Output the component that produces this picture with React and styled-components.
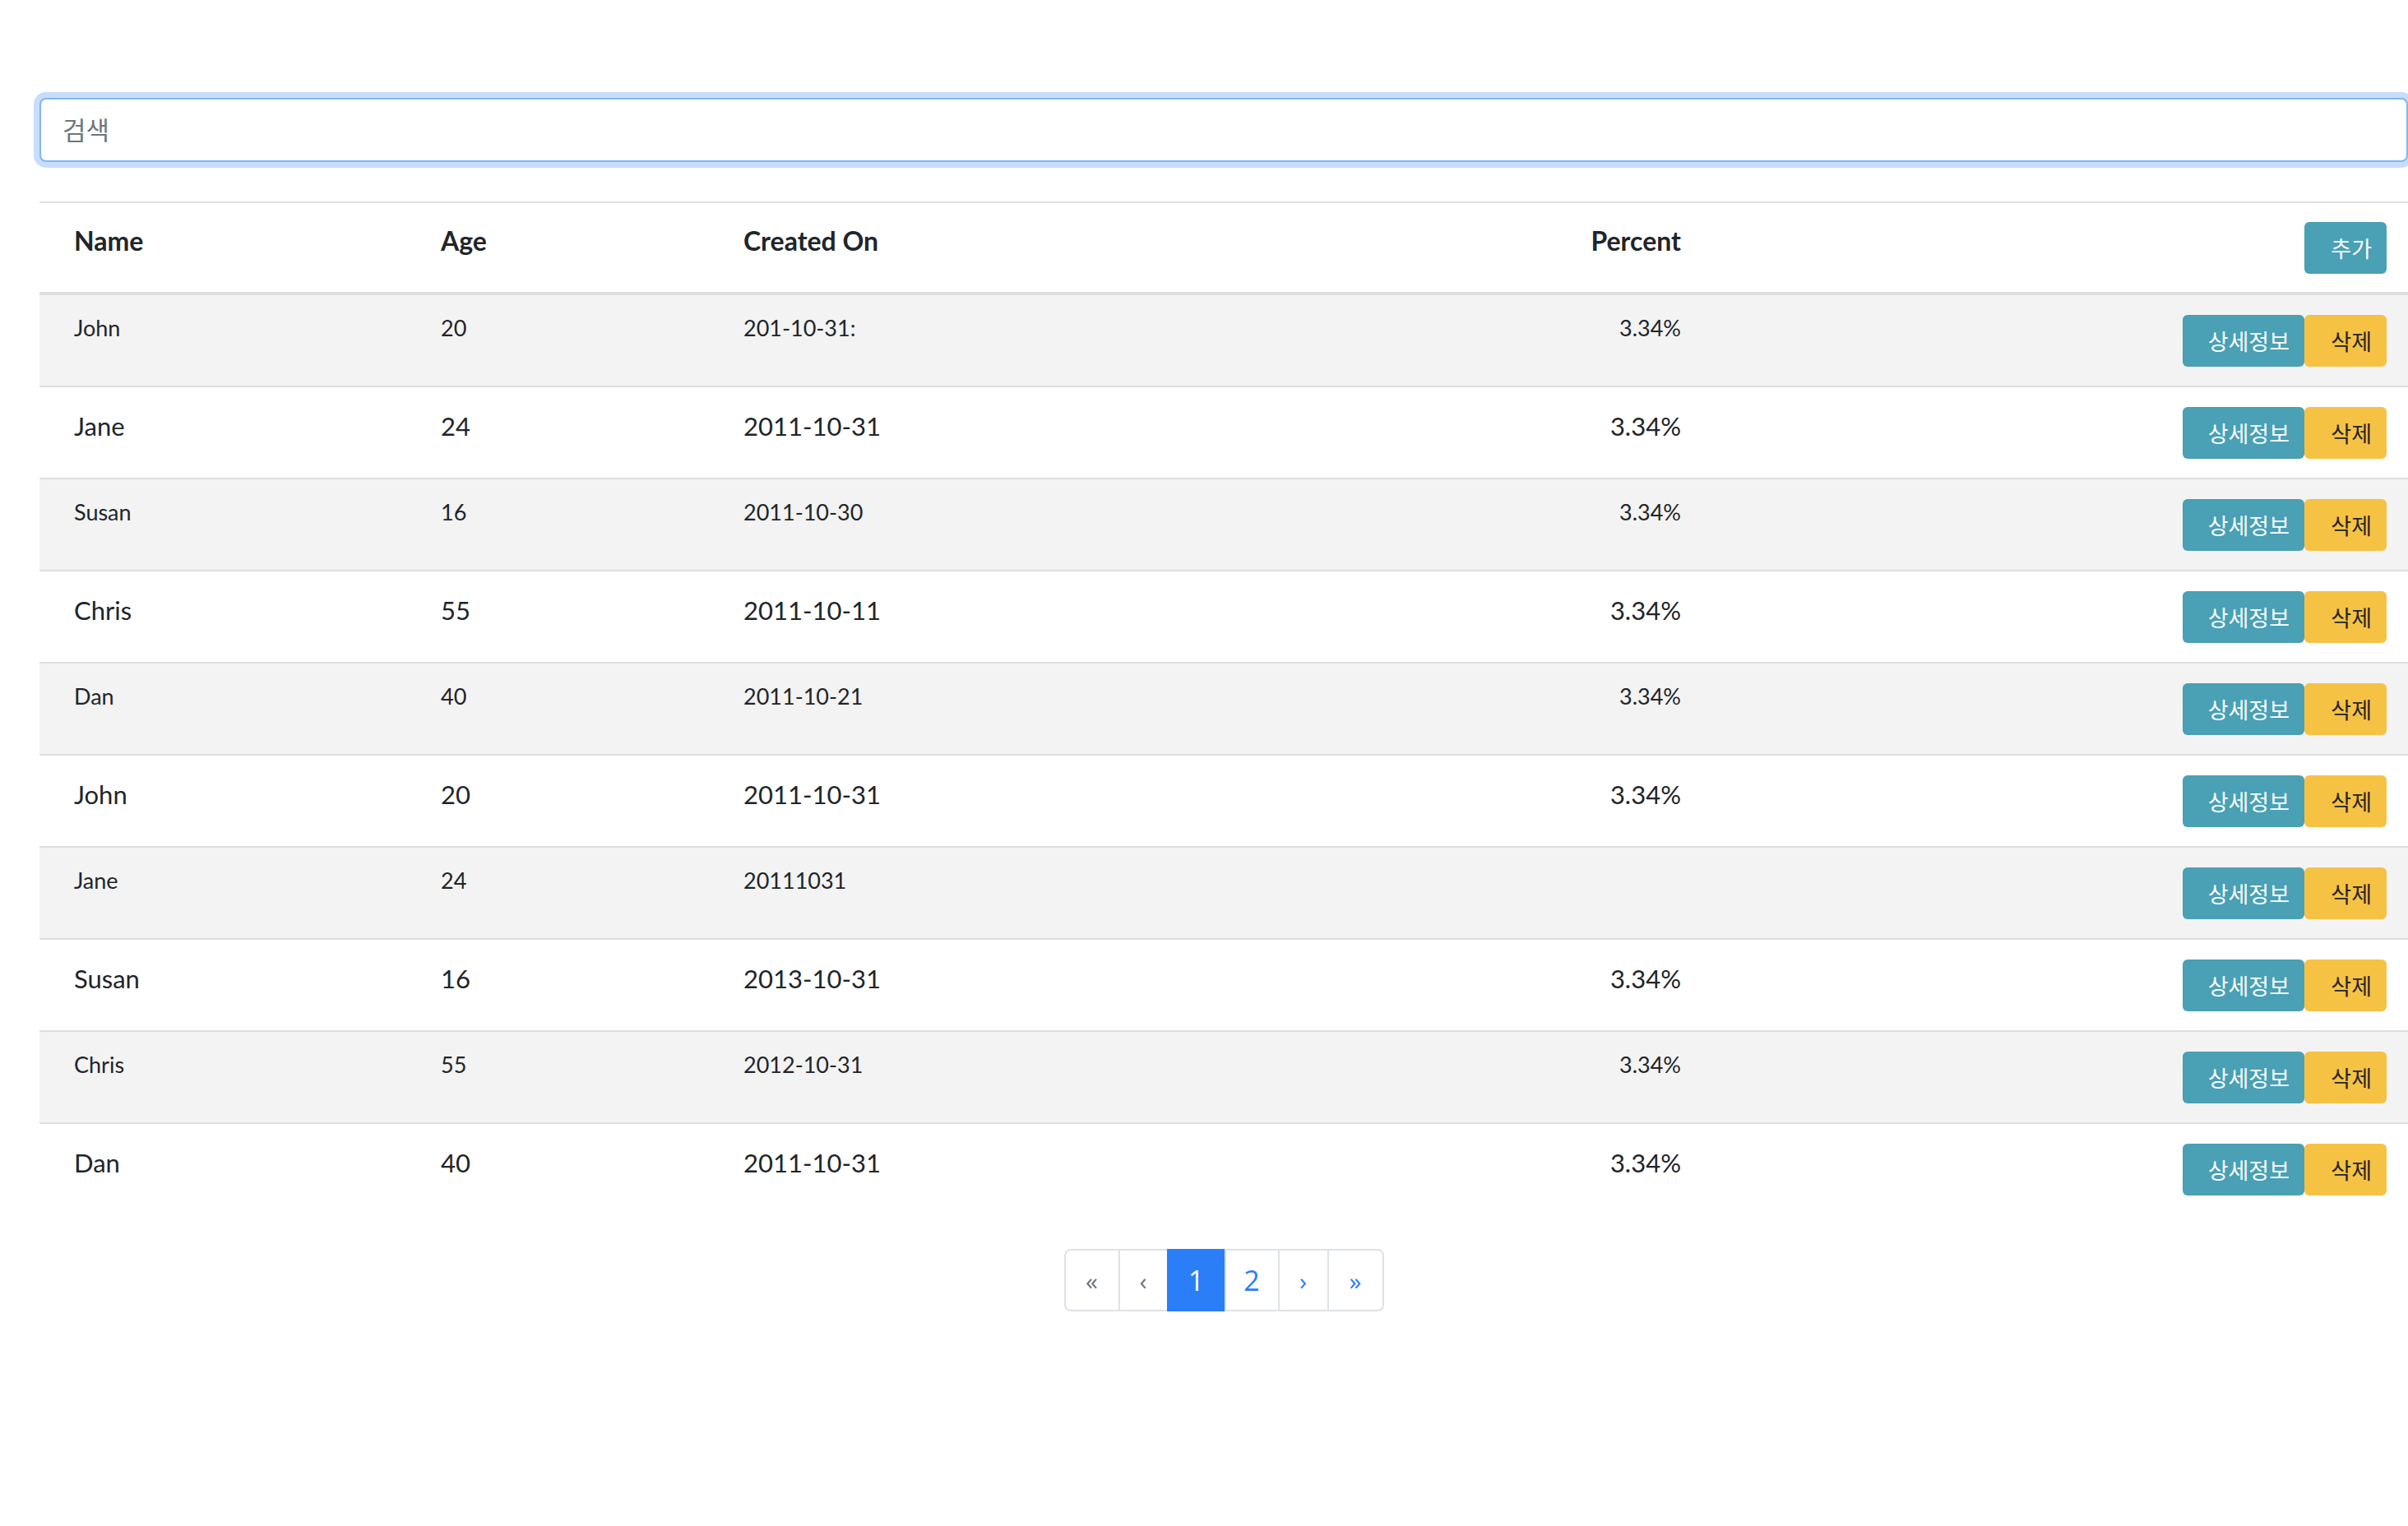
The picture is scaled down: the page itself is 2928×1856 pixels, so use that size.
import React from 'react';
import styled, { createGlobalStyle } from 'styled-components';

const GlobalStyle = createGlobalStyle`
  html, body {
    margin: 0;
    padding: 0;
    background: #ffffff;
  }
  body {
    font-family: Lato, "Noto Sans CJK KR", sans-serif;
    color: #212529;
  }
`;

const rows = [
  { name: 'John', age: 20, created: '201-10-31:', percent: '3.34%' },
  { name: 'Jane', age: 24, created: '2011-10-31', percent: '3.34%' },
  { name: 'Susan', age: 16, created: '2011-10-30', percent: '3.34%' },
  { name: 'Chris', age: 55, created: '2011-10-11', percent: '3.34%' },
  { name: 'Dan', age: 40, created: '2011-10-21', percent: '3.34%' },
  { name: 'John', age: 20, created: '2011-10-31', percent: '3.34%' },
  { name: 'Jane', age: 24, created: '20111031', percent: '' },
  { name: 'Susan', age: 16, created: '2013-10-31', percent: '3.34%' },
  { name: 'Chris', age: 55, created: '2012-10-31', percent: '3.34%' },
  { name: 'Dan', age: 40, created: '2011-10-31', percent: '3.34%' },
];

const Page = styled.div`
  padding: 119px 0 200px 48px;
  box-sizing: border-box;
  width: 2928px;
`;

const SearchInput = styled.input`
  display: block;
  box-sizing: border-box;
  width: 100%;
  height: 78px;
  padding: 0 26px 4px;
  border: 2px solid #80b6f8;
  border-radius: 8px;
  box-shadow: 0 0 0 7px #c7ddfb;
  outline: none;
  font-family: "Noto Sans CJK KR", Lato, sans-serif;
  font-size: 31px;
  color: #495057;

  &::placeholder {
    color: #6c757d;
  }
`;

const Table = styled.div`
  margin-top: 48px;
  border-top: 2px solid #dedede;
`;

const Grid = styled.div`
  display: grid;
  grid-template-columns: 446px 368px 700px 440px 1fr;
  padding: 0 26px 0 42px;
  box-sizing: border-box;
`;

const HeadRow = styled(Grid)`
  height: 112px;
  align-items: center;
  border-bottom: 4px solid #dedede;
`;

const HeadCell = styled.div`
  font-weight: 700;
  font-size: 32px;
  line-height: 1;
  padding-bottom: 16px;
  text-align: ${(p) => (p.right ? 'right' : 'left')};
`;

const BodyRow = styled(Grid)`
  height: 112px;
  align-items: start;
  background: ${(p) => (p.striped ? '#f3f3f3' : '#ffffff')};
  border-bottom: ${(p) => (p.last ? 'none' : '2px solid #dedede')};
`;

const Cell = styled.div`
  font-size: ${(p) => (p.small ? '27px' : '31px')};
  line-height: 1.5;
  padding-top: ${(p) => (p.small ? '20px' : '24px')};
  font-weight: 400;
  text-align: ${(p) => (p.right ? 'right' : 'left')};
  white-space: nowrap;
`;

const Actions = styled.div`
  display: flex;
  justify-content: flex-end;
  padding-top: ${(p) => (p.head ? '0' : '24px')};
`;

const Button = styled.button`
  box-sizing: border-box;
  height: 63px;
  width: ${(p) => (p.wide ? '148px' : '100px')};
  padding: 0 18px 0 0;
  text-align: right;
  border: none;
  border-radius: 6px;
  font-family: "Noto Sans CJK KR", sans-serif;
  font-size: 27px;
  line-height: 1;
  background: ${(p) => (p.kind === 'warning' ? '#f6c244' : '#4aa0b5')};
  color: ${(p) => (p.kind === 'warning' ? '#212529' : '#ffffff')};
  cursor: pointer;
`;

const Pager = styled.nav`
  display: flex;
  justify-content: center;
  margin-top: 40px;
`;

const PagerList = styled.ul`
  display: flex;
  list-style: none;
  margin: 0;
  padding: 0;
`;

const PageItem = styled.li`
  box-sizing: border-box;
  height: 76px;
  width: ${(p) => p.w}px;
  display: flex;
  align-items: center;
  justify-content: center;
  font-family: "Open Sans", sans-serif;
  font-size: ${(p) => (p.num ? '34px' : '30px')};
  color: ${(p) => (p.active ? '#ffffff' : p.disabled ? '#6c757d' : '#2b7ef7')};
  background: ${(p) => (p.active ? '#2b7ef7' : '#ffffff')};
  border: 2px solid ${(p) => (p.active ? '#2b7ef7' : '#dee2e6')};
  margin-left: -2px;

  &:first-child {
    margin-left: 0;
    border-radius: 8px 0 0 8px;
  }
  &:last-child {
    border-radius: 0 8px 8px 0;
  }
`;

export default function App() {
  return (
    <>
      <GlobalStyle />
      <Page>
        <SearchInput placeholder="검색" />
        <Table>
          <HeadRow>
            <HeadCell>Name</HeadCell>
            <HeadCell>Age</HeadCell>
            <HeadCell>Created On</HeadCell>
            <HeadCell right>Percent</HeadCell>
            <Actions head>
              <Button>추가</Button>
            </Actions>
          </HeadRow>
          {rows.map((r, i) => {
            const small = i % 2 === 0;
            return (
              <BodyRow key={i} striped={small} last={i === rows.length - 1}>
                <Cell small={small}>{r.name}</Cell>
                <Cell small={small}>{r.age}</Cell>
                <Cell small={small}>{r.created}</Cell>
                <Cell small={small} right>{r.percent}</Cell>
                <Actions>
                  <Button wide>상세정보</Button>
                  <Button kind="warning">삭제</Button>
                </Actions>
              </BodyRow>
            );
          })}
        </Table>
        <Pager>
          <PagerList>
            <PageItem w={68} disabled>«</PageItem>
            <PageItem w={61} disabled>‹</PageItem>
            <PageItem w={72} num active>1</PageItem>
            <PageItem w={67} num>2</PageItem>
            <PageItem w={62}>›</PageItem>
            <PageItem w={69}>»</PageItem>
          </PagerList>
        </Pager>
      </Page>
    </>
  );
}
